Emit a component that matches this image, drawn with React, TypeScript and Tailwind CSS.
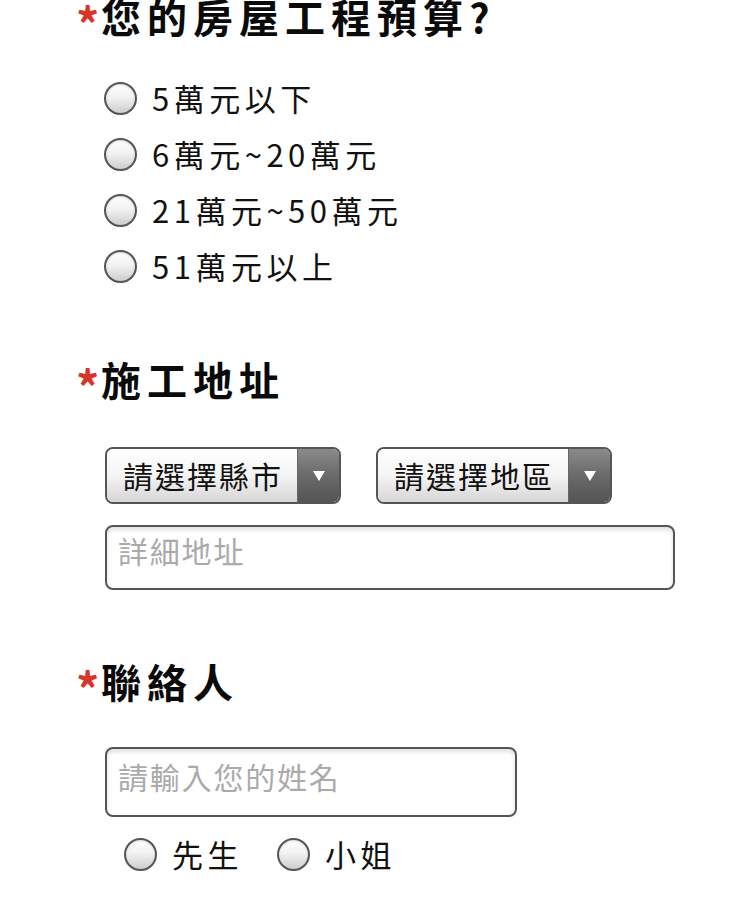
import React from "react";

const font = { fontFamily: '"Noto Sans CJK TC", "Noto Sans", sans-serif' };

function Radio({ label }: { label: string }) {
  return (
    <div className="flex items-center h-[56px]">
      <span className="w-[33px] h-[33px] rounded-full border-2 border-[#555] bg-[linear-gradient(180deg,#ffffff_0%,#f2f2f2_45%,#cdcdcd_100%)] shadow-[inset_0_1px_2px_rgba(0,0,0,0.15)] shrink-0" />
      <span className="ml-[15px] text-[31px] leading-[40px] tracking-[4.5px] text-[#111]">{label}</span>
    </div>
  );
}

function Heading({ text }: { text: string }) {
  return (
    <div className="flex items-center h-[48px] pl-[76px]">
      <span className="text-[#d7342a] text-[46px] font-bold leading-none w-[25px] mt-[12px]">*</span>
      <span className="text-[40px] font-bold leading-[48px] tracking-[6px] text-[#0a0a0a]">{text}</span>
    </div>
  );
}

function Select({ label }: { label: string }) {
  return (
    <div className="flex h-[57px] w-[236px] rounded-[8px] border-2 border-[#555] overflow-hidden">
      <div className="flex-1 flex items-center pl-[16px] bg-[linear-gradient(180deg,#ffffff_0%,#f4f4f4_50%,#d6d6d6_100%)] text-[30px] tracking-[2px] text-[#111]">
        {label}
      </div>
      <div className="w-[42px] flex items-center justify-center bg-[linear-gradient(180deg,#8a8a8a_0%,#6a6a6a_50%,#555_100%)] border-l border-[#666]">
        <svg width="14" height="12" viewBox="0 0 14 12">
          <polygon points="1,1 13,1 7,11" fill="#fff" />
        </svg>
      </div>
    </div>
  );
}

export default function App() {
  return (
    <div className="w-[750px] h-[897px] bg-white overflow-hidden relative" style={font}>
      <div className="mt-[-8px]">
        <Heading text="您的房屋工程預算?" />
      </div>
      <div className="pl-[104px] mt-[30px]">
        <Radio label="5萬元以下" />
        <Radio label="6萬元~20萬元" />
        <Radio label="21萬元~50萬元" />
        <Radio label="51萬元以上" />
      </div>
      <div className="mt-[61px]">
        <Heading text="施工地址" />
      </div>
      <div className="pl-[105px] mt-[44px] flex gap-[35px]">
        <Select label="請選擇縣市" />
        <Select label="請選擇地區" />
      </div>
      <div className="ml-[105px] mt-[21px] w-[570px] h-[65px] rounded-[8px] border-2 border-[#555] shadow-[inset_0_3px_4px_rgba(0,0,0,0.12)] px-[11px] pt-[4px] text-[30px] leading-[38px] tracking-[1.8px] text-[#aaa]">
        詳細地址
      </div>
      <div className="mt-[67px]">
        <Heading text="聯絡人" />
      </div>
      <div className="ml-[105px] mt-[42px] w-[412px] h-[70px] rounded-[8px] border-2 border-[#555] shadow-[inset_0_3px_4px_rgba(0,0,0,0.12)] px-[11px] pt-[8px] text-[30px] leading-[38px] tracking-[1.8px] text-[#aaa]">
        請輸入您的姓名
      </div>
      <div className="pl-[124px] mt-[9px] flex">
        <Radio label="先生" />
        <div className="ml-[34px]">
          <Radio label="小姐" />
        </div>
      </div>
    </div>
  );
}
